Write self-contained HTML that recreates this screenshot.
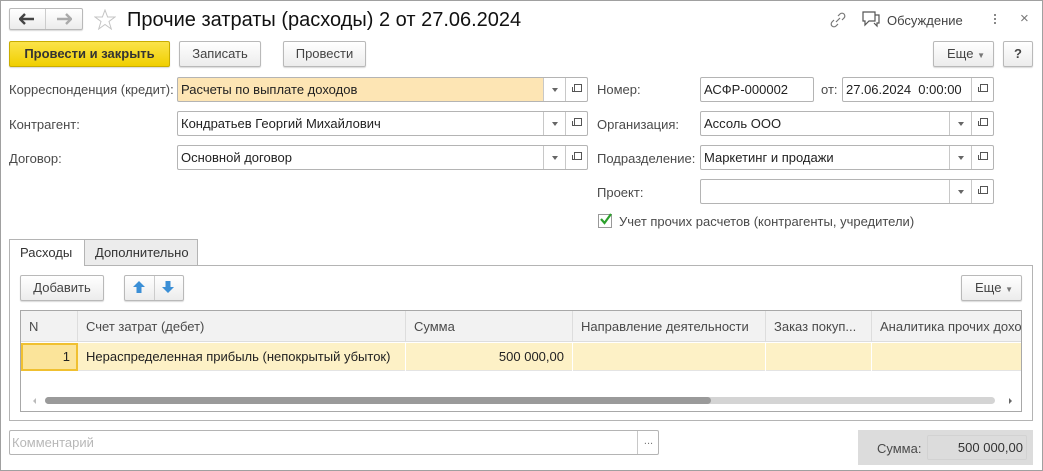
<!DOCTYPE html>
<html><head><meta charset="utf-8"><style>
*{box-sizing:border-box;margin:0;padding:0}
body{width:1043px;height:471px;background:#fff;font-family:"Liberation Sans",Arial,sans-serif;font-size:13px;color:#333;position:relative;overflow:hidden}
.a{position:absolute}
.win{left:0;top:0;width:1043px;height:471px;border:1px solid #a0a0a0}
.btn{position:absolute;border:1px solid #b9b9b9;border-radius:2px;background:linear-gradient(#fff,#ececec);box-shadow:0 1px 1px rgba(0,0,0,.15);text-align:center;line-height:23px;color:#444}
.lbl{position:absolute;color:#4a4a4a}
.fld{position:absolute;border:1px solid #b4b4b4;border-radius:2px;background:#fff;height:25px;line-height:23px;padding-left:3px;color:#222}
.dd{position:absolute;top:0;width:22px;height:23px;border-left:1px solid #c8c8c8}
.dd:after{content:"";position:absolute;left:8px;top:10px;border:3px solid transparent;border-top:4px solid #666}
.op{position:absolute;top:0;width:22px;height:23px;border-left:1px solid #c8c8c8}
.op:before{content:"";position:absolute;left:8px;top:6px;width:6px;height:6px;border:1px solid #555}
.op:after{content:"";position:absolute;left:6px;top:9px;width:4px;height:4px;border-left:1px solid #555;border-bottom:1px solid #555}
.th{position:absolute;top:0;height:31px;line-height:31px;padding-left:8px;border-right:1px solid #ddd;color:#4a4a4a;white-space:nowrap;overflow:hidden}
.td{position:absolute;top:32px;height:28px;line-height:28px;border-right:1px solid #fff;color:#222;white-space:nowrap}
</style></head><body>
<div class="a win"></div>
<!-- nav -->
<div class="btn" style="left:9px;top:8px;width:74px;height:22px"></div>
<div class="a" style="left:45px;top:9px;width:1px;height:20px;background:#ccc"></div>
<svg class="a" style="left:19px;top:13px" width="16" height="12"><path d="M1 6H15M6 1L1 6L6 11" stroke="#444" stroke-width="2.4" fill="none"/></svg>
<svg class="a" style="left:56px;top:13px" width="16" height="12"><path d="M1 6H15M10 1L15 6L10 11" stroke="#aaa" stroke-width="2.4" fill="none"/></svg>
<svg class="a" style="left:94px;top:9px" width="22" height="21"><path d="M11 1L13.6 8H21L15 12.5L17.3 20L11 15.5L4.7 20L7 12.5L1 8H8.4Z" fill="none" stroke="#c4c4c4" stroke-width="1"/></svg>
<div class="a" style="left:127px;top:9px;font-size:20px;color:#111">Прочие затраты (расходы) 2 от 27.06.2024</div>
<svg class="a" style="left:829px;top:11px" width="18" height="18"><path d="M7 11L11 7M5 9L3 11a2.5 2.5 0 0 0 4 4L9 13M9 5L11 3a2.5 2.5 0 0 1 4 4L13 9" stroke="#777" fill="none" stroke-width="1.2"/></svg>
<svg class="a" style="left:862px;top:11px" width="18" height="17"><path d="M1 1H13V10H7L3 14V10H1Z M13 4H17V12H15V15L12 12" stroke="#555" fill="none" stroke-width="1.2"/></svg>
<div class="a" style="left:887px;top:13px;color:#444">Обсуждение</div>
<div class="a" style="left:994px;top:14px;width:2px;height:12px;background:repeating-linear-gradient(#888 0 2px,transparent 2px 4px)"></div>
<div class="a" style="left:1020px;top:10px;color:#777;font-size:15px">×</div>
<!-- toolbar -->
<div class="btn" style="left:9px;top:41px;width:161px;height:26px;background:linear-gradient(#fbe34a,#f0cf00);border-color:#c9ad00;font-weight:bold;color:#333">Провести и закрыть</div>
<div class="btn" style="left:179px;top:41px;width:82px;height:26px">Записать</div>
<div class="btn" style="left:283px;top:41px;width:83px;height:26px">Провести</div>
<div class="btn" style="left:933px;top:41px;width:61px;height:26px;text-align:left;padding-left:13px">Еще <span style="font-size:8px;color:#777">▼</span></div>
<div class="btn" style="left:1003px;top:41px;width:30px;height:26px;font-weight:bold">?</div>
<!-- left fields -->
<div class="lbl" style="left:9px;top:82px">Корреспонденция (кредит):</div>
<div class="fld" style="left:177px;top:77px;width:411px;background:linear-gradient(90deg,#fde5b4 0,#fde5b4 366px,#fff 366px)">Расчеты по выплате доходов<div class="dd" style="left:365px"></div><div class="op" style="left:387px"></div></div>
<div class="lbl" style="left:9px;top:117px">Контрагент:</div>
<div class="fld" style="left:177px;top:111px;width:411px">Кондратьев Георгий Михайлович<div class="dd" style="left:365px"></div><div class="op" style="left:387px"></div></div>
<div class="lbl" style="left:9px;top:151px">Договор:</div>
<div class="fld" style="left:177px;top:145px;width:411px">Основной договор<div class="dd" style="left:365px"></div><div class="op" style="left:387px"></div></div>
<!-- right fields -->
<div class="lbl" style="left:597px;top:82px">Номер:</div>
<div class="fld" style="left:700px;top:77px;width:114px">АСФР-000002</div>
<div class="lbl" style="left:821px;top:82px">от:</div>
<div class="fld" style="left:842px;top:77px;width:152px">27.06.2024 &nbsp;0:00:00<div class="op" style="left:128px;border-left:1px solid #c8c8c8"></div></div>
<div class="lbl" style="left:597px;top:117px">Организация:</div>
<div class="fld" style="left:700px;top:111px;width:294px">Ассоль ООО<div class="dd" style="left:248px"></div><div class="op" style="left:270px"></div></div>
<div class="lbl" style="left:597px;top:151px">Подразделение:</div>
<div class="fld" style="left:700px;top:145px;width:294px">Маркетинг и продажи<div class="dd" style="left:248px"></div><div class="op" style="left:270px"></div></div>
<div class="lbl" style="left:597px;top:185px">Проект:</div>
<div class="fld" style="left:700px;top:179px;width:294px"><div class="dd" style="left:248px"></div><div class="op" style="left:270px"></div></div>
<div class="a" style="left:598px;top:214px;width:14px;height:14px;border:1px solid #999;background:#fff"></div>
<svg class="a" style="left:599px;top:212px" width="14" height="14"><path d="M2 7L5.5 11L12 2" stroke="#2ca02c" stroke-width="2.2" fill="none"/></svg>
<div class="lbl" style="left:619px;top:214px">Учет прочих расчетов (контрагенты, учредители)</div>
<!-- tabs -->
<div class="a" style="left:9px;top:265px;width:1024px;height:156px;border:1px solid #b4b4b4"></div>
<div class="a" style="left:84px;top:239px;width:114px;height:27px;border:1px solid #b4b4b4;background:#ececec;line-height:26px;padding-left:10px;color:#333">Дополнительно</div>
<div class="a" style="left:9px;top:239px;width:76px;height:27px;border:1px solid #b4b4b4;border-bottom:none;background:#fff;line-height:26px;padding-left:10px;color:#333">Расходы</div>
<div class="btn" style="left:20px;top:275px;width:84px;height:26px">Добавить</div>
<div class="btn" style="left:124px;top:275px;width:60px;height:26px"></div>
<div class="a" style="left:154px;top:276px;width:1px;height:24px;background:#ccc"></div>
<svg class="a" style="left:132px;top:280px" width="14" height="14"><path d="M7 1L13 7H9.5V13H4.5V7H1Z" fill="#3b8fd6"/></svg>
<svg class="a" style="left:161px;top:280px" width="14" height="14"><path d="M7 13L13 7H9.5V1H4.5V7H1Z" fill="#3b8fd6"/></svg>
<div class="btn" style="left:961px;top:275px;width:61px;height:26px;text-align:left;padding-left:13px">Еще <span style="font-size:8px;color:#777">▼</span></div>
<!-- table -->
<div class="a" style="left:20px;top:310px;width:1002px;height:102px;border:1px solid #a8a8a8;overflow:hidden">
 <div class="a" style="left:0;top:0;width:1002px;height:31px;background:#f2f2f2;border-bottom:1px solid #ddd"></div>
 <div class="th" style="left:0;width:57px">N</div>
 <div class="th" style="left:57px;width:328px">Счет затрат (дебет)</div>
 <div class="th" style="left:385px;width:167px">Сумма</div>
 <div class="th" style="left:552px;width:193px">Направление деятельности</div>
 <div class="th" style="left:745px;width:106px">Заказ покуп...</div>
 <div class="th" style="left:851px;width:160px;border:none">Аналитика прочих доходов</div>
 <div class="a" style="left:0;top:32px;width:1002px;height:28px;background:#fdf1c6;border-bottom:1px solid #e4e4e4"></div>
 <div class="td" style="left:0;width:57px;background:#fbe49a;border:2px solid #f0c030;line-height:24px;text-align:right;padding-right:6px">1</div>
 <div class="td" style="left:57px;width:328px;padding-left:8px">Нераспределенная прибыль (непокрытый убыток)</div>
 <div class="td" style="left:385px;width:167px;text-align:right;padding-right:8px">500 000,00</div>
 <div class="td" style="left:552px;width:193px"></div>
 <div class="td" style="left:745px;width:106px"></div>
 <div class="a" style="left:24px;top:86px;width:950px;height:7px;border-radius:4px;background:#d4d4d4"></div>
 <div class="a" style="left:24px;top:86px;width:666px;height:7px;border-radius:4px;background:#9a9a9a"></div>
 <div class="a" style="left:9px;top:87px;border:3px solid transparent;border-right:3px solid #bbb"></div>
 <div class="a" style="left:988px;top:87px;border:3px solid transparent;border-left:3px solid #666"></div>
</div>
<!-- footer -->
<div class="fld" style="left:9px;top:430px;width:650px;color:#b8b8b8;padding-left:2px">Комментарий<div class="a" style="left:627px;top:0;width:22px;height:23px;border-left:1px solid #c8c8c8;text-align:center;color:#777;line-height:20px;font-size:11px">...</div></div>
<div class="a" style="left:858px;top:430px;width:175px;height:35px;background:#dcdcdc"></div>
<div class="lbl" style="left:877px;top:441px">Сумма:</div>
<div class="a" style="left:927px;top:435px;width:100px;height:25px;border:1px solid #d2d2d2;border-radius:2px;text-align:right;line-height:23px;padding-right:3px;color:#333">500 000,00</div>
</body></html>
